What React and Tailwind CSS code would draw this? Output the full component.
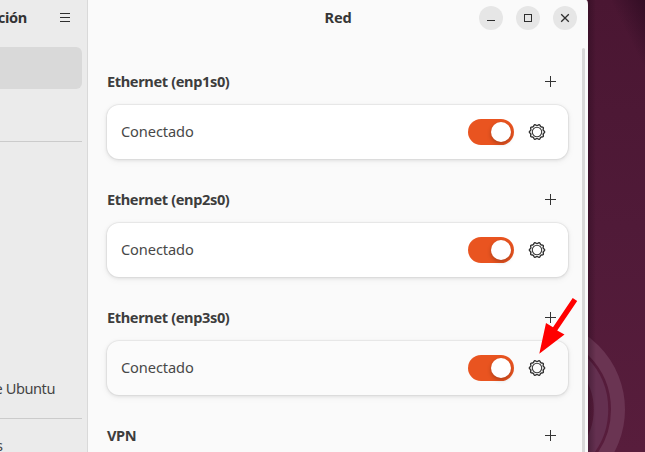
import React from "react";

function Plus() {
  return (
    <svg width="11" height="11" viewBox="0 0 11 11" className="block">
      <path d="M5 0h1v11H5zM0 5h11v1H0z" fill="#333333" />
    </svg>
  );
}

// Outline of a ten-toothed cog, centred on the origin.
const COG_POINTS = Array.from({ length: 120 }, (_, i) => {
  const angle = (i / 120) * Math.PI * 2;
  const radius = 7.05 + 0.6 * Math.cos(10 * angle);
  return `${(radius * Math.sin(angle)).toFixed(2)},${(-radius * Math.cos(angle)).toFixed(2)}`;
}).join(" ");

function Gear() {
  return (
    <svg width="18" height="18" viewBox="-9 -9 18 18" className="block">
      <polygon points={COG_POINTS} fill="none" stroke="#303030" strokeWidth="1.35" transform="rotate(18)" />
      <circle r="4.7" fill="none" stroke="#3c3c3c" strokeWidth="1.1" />
    </svg>
  );
}

function Switch() {
  return (
    <div className="flex h-[26px] w-[46px] items-center justify-end rounded-full bg-[#e95420] px-[3px]">
      <div className="h-5 w-5 rounded-full bg-white shadow-[0_2px_4px_rgba(0,0,0,0.25)]" />
    </div>
  );
}

function Heading({ children }) {
  return (
    <div className="flex h-[22px] items-center justify-between pr-3">
      <h2 className="text-[14.6px] leading-[22px] font-bold tracking-[-0.38px] text-[#3d3d3d]">{children}</h2>
      <Plus />
    </div>
  );
}

function Connection({ name, dim }) {
  return (
    <section className="h-[118px]">
      <Heading>{name}</Heading>
      <div
        className={
          "mt-[13px] flex h-[54px] items-center rounded-xl pl-3.5 pr-[22px] shadow-[0_0_0_1px_rgba(0,0,0,0.04),0_1px_3px_1px_rgba(0,0,0,0.07),0_2px_6px_2px_rgba(0,0,0,0.03)] " +
          (dim ? "bg-[#fbfbfb]" : "bg-white")
        }
      >
        <span className="flex-1 pb-0.5 text-[14.6px] leading-5 tracking-[-0.1px] text-[#484848]">Conectado</span>
        <Switch />
        <span className="ml-3.5">
          <Gear />
        </span>
      </div>
    </section>
  );
}

function WindowButton({ children }) {
  return (
    <button className="flex h-6 w-6 items-center justify-center rounded-full bg-[#e6e6e6]">
      <svg width="10" height="10" viewBox="0 0 10 10" className="block">
        {children}
      </svg>
    </button>
  );
}

export default function App() {
  return (
    <div className="relative flex h-[452px] w-[645px] overflow-hidden bg-[#501a38] font-['Noto_Sans','Open_Sans',sans-serif]">
      <svg className="absolute top-0 right-0" width="65" height="452" viewBox="580 0 65 452">
        <defs>
          <linearGradient id="base" x1="0" y1="0" x2="0" y2="1">
            <stop offset="0" stopColor="#4a1632" />
            <stop offset="0.5" stopColor="#501a38" />
            <stop offset="1" stopColor="#581d3c" />
          </linearGradient>
          <linearGradient id="corner" gradientUnits="userSpaceOnUse" x1="645" y1="0" x2="617" y2="14">
            <stop offset="0" stopColor="#2b0a20" stopOpacity="0.75" />
            <stop offset="1" stopColor="#2b0a20" stopOpacity="0" />
          </linearGradient>
          <linearGradient id="edge">
            <stop offset="0" stopColor="#1e0616" stopOpacity="0.35" />
            <stop offset="1" stopColor="#1e0616" stopOpacity="0" />
          </linearGradient>
        </defs>
        <rect x="580" width="65" height="452" fill="url(#base)" />
        <rect x="580" width="65" height="452" fill="url(#corner)" />
        <circle cx="534.5" cy="409.5" r="83.5" fill="none" stroke="#6a3452" strokeWidth="14" />
        <circle cx="534.5" cy="409.5" r="66.5" fill="none" stroke="#643050" strokeWidth="14.5" />
        <rect x="588" width="8" height="452" fill="url(#edge)" />
      </svg>

      <div className="relative flex h-full w-[588px] overflow-hidden rounded-tr-[2px_5px] bg-[#fafafa]">
        <aside className="flex w-[88px] shrink-0 flex-col overflow-hidden border-r border-[#d9d9d9] bg-[#ebebeb]">
          <header className="flex h-[47px] shrink-0 items-start">
            <div className="mt-1.5 flex w-[27px] shrink-0 justify-end text-[14.6px] leading-[22px] font-bold tracking-[-0.3px] whitespace-nowrap text-[#333]">
              Configuración
            </div>
            <svg className="mt-[13px] ml-[33px] block" width="10" height="9" viewBox="0 0 10 9">
              <path d="M0 0h10v1H0zM0 4h10v1H0zM0 8h10v1H0z" fill="#2e2e2e" />
            </svg>
          </header>
          <div className="h-[42px] w-[82px] shrink-0 rounded-r-md bg-[#d9d9d9]" />
          <div className="mt-[52px] h-px w-[82px] shrink-0 bg-[#cbcbcb]" />
          <div className="mt-[236px] flex h-[22px] w-[55px] shrink-0 items-center justify-end text-[14.6px] tracking-[-0.45px] whitespace-nowrap text-[#444]">
            Escritorio de Ubuntu
          </div>
          <div className="mt-[18px] h-px w-[82px] shrink-0 bg-[#cbcbcb]" />
          <div className="mt-[16px] flex h-[22px] w-[3px] shrink-0 items-center justify-end text-[14.6px] whitespace-nowrap text-[#444]">
            Aplicaciones
          </div>
        </aside>

        <main className="flex w-[500px] shrink-0 flex-col">
          <header className="grid h-9 shrink-0 grid-cols-[1fr_auto_1fr] items-center px-[11px]">
            <span />
            <h1 className="pb-0.5 text-[14.6px] leading-[22px] font-bold tracking-[-0.2px] text-[#363636]">Red</h1>
            <div className="flex justify-end gap-[13px]">
              <WindowButton>
                <path d="M1 7h8v1H1z" fill="#2e2e2e" />
              </WindowButton>
              <WindowButton>
                <rect x="1.5" y="1.5" width="7" height="7" fill="none" stroke="#2e2e2e" />
              </WindowButton>
              <WindowButton>
                <path d="M1.2 1.2l7.6 7.6M8.8 1.2l-7.6 7.6" fill="none" stroke="#2e2e2e" strokeWidth="1.3" />
              </WindowButton>
            </div>
          </header>
          <div className="mt-3 flex flex-1">
            <div className="w-[480px] pt-[22px] pl-[19px]">
              <Connection name="Ethernet (enp1s0)" />
              <Connection name="Ethernet (enp2s0)" />
              <Connection name="Ethernet (enp3s0)" dim />
              <Heading>VPN</Heading>
            </div>
            <div className="ml-3.5 w-[3px] rounded-t-full bg-[#d9d9d9]" />
          </div>
        </main>
      </div>

      <svg className="absolute top-[290px] left-[530px]" width="60" height="70" viewBox="530 290 60 70">
        <path d="M539.3 353.7L546 323L553 327.3L572.7 298L577.2 301L557.2 330.4L564.5 334.5Z" fill="#ff0000" />
      </svg>
    </div>
  );
}
